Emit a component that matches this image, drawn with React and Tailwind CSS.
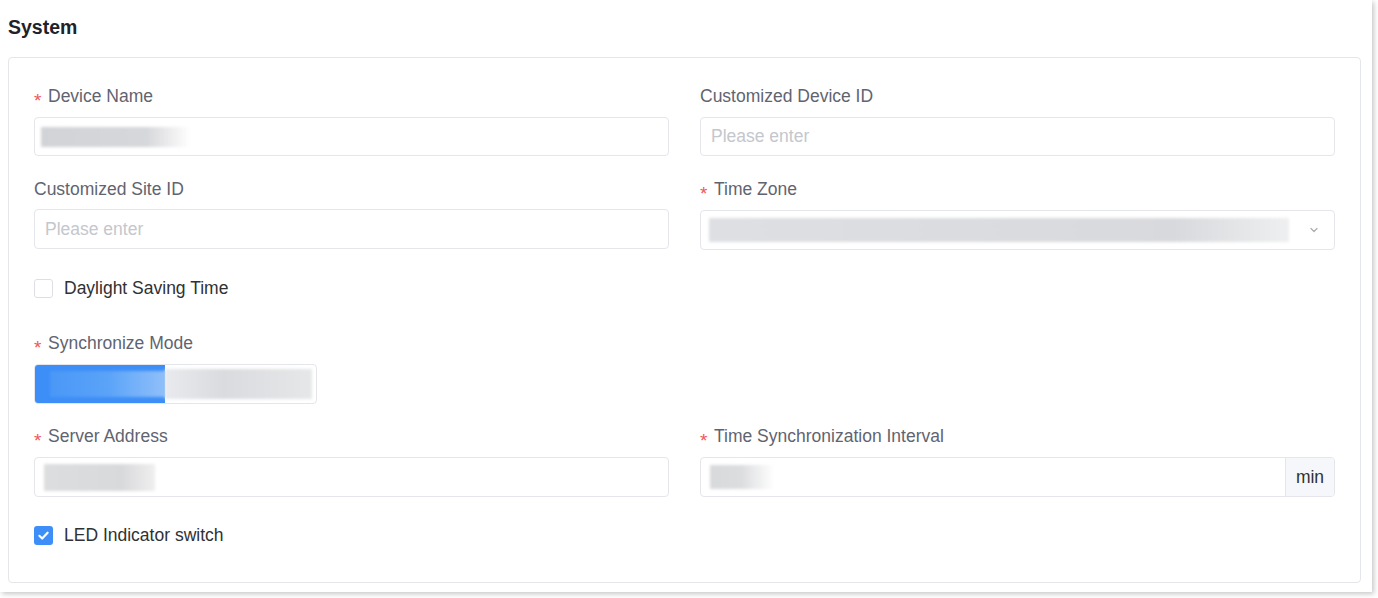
import React from "react";

function Label({ required, children }) {
  return (
    <div className="h-6 flex items-center text-[17.5px] text-[#5f6470] mb-[9px]">
      {required && <span className="text-[#f2545b] mr-[5px] text-[19px] leading-none mt-[9px] w-[9px]">*</span>}
      <span>{children}</span>
    </div>
  );
}

function Blur({ className }) {
  return <div className={"rounded-[1px] blur-[1.5px] " + className} />;
}

function Checkbox({ checked, children }) {
  return (
    <label className="flex items-center h-6">
      {checked ? (
        <span className="w-[19px] h-[19px] rounded-[3px] bg-[#3d8ef7] flex items-center justify-center">
          <svg width="13" height="13" viewBox="0 0 12 12" fill="none">
            <path d="M2.2 6.3 4.8 8.8 9.8 3.4" stroke="white" strokeWidth="2" strokeLinecap="round" strokeLinejoin="round" />
          </svg>
        </span>
      ) : (
        <span className="w-[19px] h-[19px] rounded-[3px] border border-[#dcdfe6] bg-white" />
      )}
      <span className="ml-[11px] text-[17.5px] text-[#303133]">{children}</span>
    </label>
  );
}

export default function App() {
  return (
    <div className="w-full h-[598px] bg-white font-['Liberation_Sans',Arial,sans-serif]">
      <div className="w-[1372px] h-[592px] bg-white shadow-[2px_2px_5px_rgba(0,0,0,0.22)] pl-2 pr-[11px] pt-[15px]">
        <h2 className="text-[19.5px] leading-6 font-bold text-[#1f2329]">System</h2>

        <div className="mt-[18px] h-[526px] border border-[#e4e6eb] rounded-[4px] px-[25px] pt-[26px]">
          <div className="grid grid-cols-2 gap-x-[31px]">
            {/* row 1 */}
            <div className="mb-[21px]">
              <Label required>Device Name</Label>
              <div className="h-[39px] border border-[#e4e6eb] rounded-[4px] flex items-center px-[6px]">
                <Blur className="w-[150px] h-[20px] bg-linear-to-r from-[#d2d3d6] via-[#d6d7da] via-70% to-transparent" />
              </div>
            </div>
            <div className="mb-[21px]">
              <Label>Customized Device ID</Label>
              <div className="h-[39px] border border-[#e4e6eb] rounded-[4px] flex items-center px-[10px] text-[17.5px] text-[#c4c7cd]">
                Please enter
              </div>
            </div>

            {/* row 2 */}
            <div className="mb-[20px]">
              <Label>Customized Site ID</Label>
              <div className="h-[40px] -mt-px border border-[#e4e6eb] rounded-[4px] flex items-center px-[10px] text-[17.5px] text-[#c4c7cd]">
                Please enter
              </div>
            </div>
            <div className="mb-[20px]">
              <Label required>Time Zone</Label>
              <div className="h-[40px] border border-[#e4e6eb] rounded-[4px] flex items-center pl-[8px] pr-[14px]">
                <Blur className="w-[580px] h-[24px] bg-linear-to-r from-[#dedfe2] via-[#d8d9dc] via-80% to-[#eeeff0]" />
                <svg className="ml-auto" width="12" height="12" viewBox="0 0 12 12" fill="none">
                  <path d="M3 4.5 6 7.5 9 4.5" stroke="#a8abb2" strokeWidth="1.2" strokeLinecap="round" strokeLinejoin="round" />
                </svg>
              </div>
            </div>
          </div>

          <div className="mt-[6px] mb-[31px]">
            <Checkbox>Daylight Saving Time</Checkbox>
          </div>

          <div className="mb-[20px]">
            <Label required>Synchronize Mode</Label>
            <div className="w-[283px] h-[40px] border border-[#e4e6eb] rounded-[4px] flex items-stretch overflow-hidden">
              <div className="w-[131px] bg-[#3d8ef7] flex items-center pl-[16px] -my-px -ml-px">
                <Blur className="w-[126px] h-[26px] bg-linear-to-r from-[#4a97f7] via-[#5aa3f8] to-[#8fbff9]" />
              </div>
              <div className="flex-1 flex items-center pr-[4px]">
                <Blur className="w-full h-[30px] bg-linear-to-r from-[#e8eaee] via-[#dadbde] via-40% to-[#e6e7e9]" />
              </div>
            </div>
          </div>

          <div className="grid grid-cols-2 gap-x-[31px]">
            <div className="mb-[26px]">
              <Label required>Server Address</Label>
              <div className="h-[40px] border border-[#e4e6eb] rounded-[4px] flex items-center px-[9px]">
                <Blur className="w-[111px] h-[27px] bg-linear-to-r from-[#dcdddf] via-[#d8d9db] via-70% to-[#efefef]" />
              </div>
            </div>
            <div className="mb-[26px]">
              <Label required>Time Synchronization Interval</Label>
              <div className="h-[40px] border border-[#e4e6eb] rounded-[4px] flex items-stretch overflow-hidden">
                <div className="flex-1 flex items-center px-[9px]">
                  <Blur className="w-[64px] h-[24px] bg-linear-to-r from-[#d8d9db] via-[#dcdddf] to-transparent" />
                </div>
                <div className="w-[49px] bg-[#f5f7fa] border-l border-[#e4e6eb] flex items-center justify-center text-[17.5px] text-[#303133]">
                  min
                </div>
              </div>
            </div>
          </div>

          <div>
            <Checkbox checked>LED Indicator switch</Checkbox>
          </div>
        </div>
      </div>
    </div>
  );
}
